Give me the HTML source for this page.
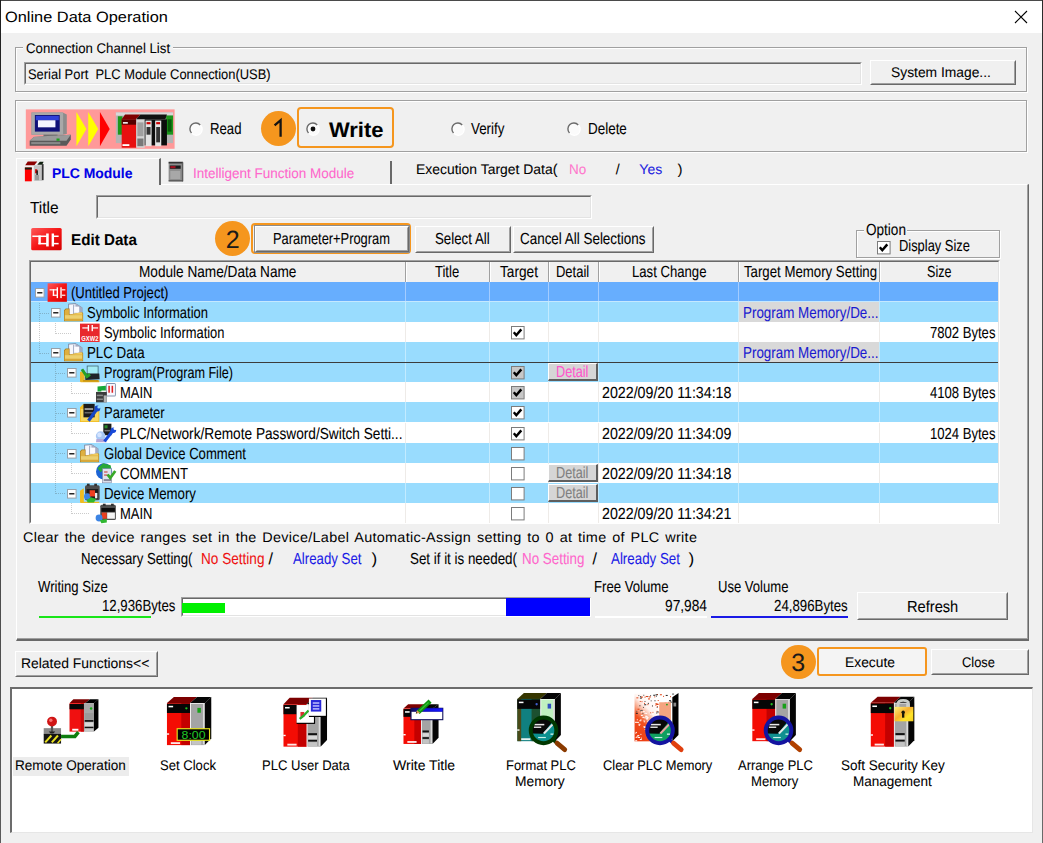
<!DOCTYPE html><html><head><meta charset="utf-8"><title>Online Data Operation</title><style>
html,body{margin:0;padding:0}
body{width:1043px;height:843px;position:relative;overflow:hidden;background:#f0f0f0;font-family:"Liberation Sans", sans-serif;}
body>div,body>svg,body>span{position:absolute;display:block}
span.t{white-space:pre;line-height:1;transform-origin:0 50%;text-rendering:geometricPrecision;-webkit-text-stroke:0.07px;}

</style></head><body>
<div style="left:0px;top:0px;width:1043px;height:33px;background:#fff;"></div>
<div style="left:0px;top:0px;width:1043px;height:1px;background:#4a4a4a;"></div>
<div style="left:0px;top:0px;width:1px;height:843px;background:linear-gradient(#1e1e1e,#3a3a3a 30%,#5a5a5a);"></div>
<div style="left:1042px;top:0px;width:1px;height:843px;background:linear-gradient(#2a2a2a,#4a4a4a 40%,#6a6a6a);"></div>
<span class="t" style="font-size:15px;color:#000;-webkit-text-stroke:0;left:4.92px;top:10.00px;transform:scaleX(1.0910);">Online Data Operation</span>
<svg style="left:1014px;top:10px" width="14" height="14" viewBox="0 0 14 14"><path d="M1 1 L13 13 M13 1 L1 13" stroke="#000" stroke-width="1.1" fill="none"/></svg>
<div style="left:16px;top:48px;width:1012px;height:45px;box-sizing:border-box;border:1px solid #fff;"></div>
<div style="left:15px;top:47px;width:1012px;height:45px;box-sizing:border-box;border:1px solid #a0a0a0;"></div>
<div style="left:23px;top:42px;width:150px;height:12px;background:#f0f0f0;"></div>
<span class="t" style="font-size:14px;color:#000;left:25.57px;top:41.00px;transform:scaleX(0.9444);">Connection Channel List</span>
<div style="left:24px;top:62px;width:838px;height:23px;background:#f0f0f0;box-sizing:border-box;border-top:1px solid #a0a0a0;border-left:1px solid #a0a0a0;border-right:1px solid #fff;border-bottom:1px solid #fff;"></div>
<div style="left:25px;top:63px;width:836px;height:21px;box-sizing:border-box;border-top:1px solid #696969;border-left:1px solid #696969;border-right:1px solid #e3e3e3;border-bottom:1px solid #e3e3e3;"></div>
<span class="t" style="font-size:14px;color:#000;left:27.57px;top:67.00px;transform:scaleX(0.9222);">Serial Port  PLC Module Connection(USB)</span>
<div style="left:870px;top:60px;width:146px;height:25px;background:#f0f0f0;box-sizing:border-box;border-top:1px solid #fff;border-left:1px solid #fff;border-right:1px solid #696969;border-bottom:1px solid #696969;"></div>
<div style="left:871px;top:61px;width:144px;height:23px;box-sizing:border-box;border-top:1px solid #f0f0f0;border-left:1px solid #f0f0f0;border-right:1px solid #a0a0a0;border-bottom:1px solid #a0a0a0;"></div>
<span class="t" style="font-size:14px;color:#000;left:891.17px;top:65.00px;transform:scaleX(0.9872);">System Image...</span>
<div style="left:16px;top:101px;width:1012px;height:52px;box-sizing:border-box;border:1px solid #fff;"></div>
<div style="left:15px;top:100px;width:1012px;height:52px;box-sizing:border-box;border:1px solid #a0a0a0;"></div>

<svg style="left:187.7px;top:120.9px" width="16" height="16" viewBox="0 0 16 16"><circle cx="8" cy="8" r="6.2" fill="#fbfbfb"/><path d="M3.5 12.0 A5.9 5.9 0 0 1 12.2 3.9" fill="none" stroke="#6a6a6a" stroke-width="1.4"/><path d="M12.6 4.3 A5.9 5.9 0 0 1 3.9 12.4" fill="none" stroke="#fff" stroke-width="1.3"/></svg>
<span class="t" style="font-size:16px;color:#000;left:210.28px;top:122.00px;transform:scaleX(0.8220);">Read</span>
<div style="left:261.1px;top:110.5px;width:35.0px;height:35.0px;background:#f5961e;border-radius:50%;"></div>
<svg style="left:268.6px;top:116px" width="20" height="24" viewBox="0 0 20 24"><path d="M5.6 9.4 L11.6 4.2 L11.6 20.8" fill="none" stroke="#141414" stroke-width="2.3" stroke-linejoin="miter"/></svg>
<div style="left:297px;top:107px;width:97px;height:41px;box-sizing:border-box;border:2px solid #f5961e;border-radius:4px;"></div>
<svg style="left:304.8px;top:120.9px" width="16" height="16" viewBox="0 0 16 16"><circle cx="8" cy="8" r="6.2" fill="#fbfbfb"/><path d="M3.5 12.0 A5.9 5.9 0 0 1 12.2 3.9" fill="none" stroke="#6a6a6a" stroke-width="1.4"/><path d="M12.6 4.3 A5.9 5.9 0 0 1 3.9 12.4" fill="none" stroke="#fff" stroke-width="1.3"/><circle cx="8" cy="8" r="2.4" fill="#111"/></svg>
<span class="t" style="font-size:21px;color:#000;font-weight:bold;left:328.56px;top:120.00px;transform:scaleX(1.0435);">Write</span>
<svg style="left:450.3px;top:120.9px" width="16" height="16" viewBox="0 0 16 16"><circle cx="8" cy="8" r="6.2" fill="#fbfbfb"/><path d="M3.5 12.0 A5.9 5.9 0 0 1 12.2 3.9" fill="none" stroke="#6a6a6a" stroke-width="1.4"/><path d="M12.6 4.3 A5.9 5.9 0 0 1 3.9 12.4" fill="none" stroke="#fff" stroke-width="1.3"/></svg>
<span class="t" style="font-size:16px;color:#000;left:471.28px;top:122.00px;transform:scaleX(0.8357);">Verify</span>
<svg style="left:566.3px;top:120.9px" width="16" height="16" viewBox="0 0 16 16"><circle cx="8" cy="8" r="6.2" fill="#fbfbfb"/><path d="M3.5 12.0 A5.9 5.9 0 0 1 12.2 3.9" fill="none" stroke="#6a6a6a" stroke-width="1.4"/><path d="M12.6 4.3 A5.9 5.9 0 0 1 3.9 12.4" fill="none" stroke="#fff" stroke-width="1.3"/></svg>
<span class="t" style="font-size:16px;color:#000;left:587.88px;top:122.00px;transform:scaleX(0.8398);">Delete</span>
<div style="left:16px;top:184px;width:1013px;height:457px;box-sizing:border-box;border-top:1px solid #fff;border-left:1px solid #fff;border-right:2px solid #696969;border-bottom:2px solid #696969;"></div>
<div style="left:1027px;top:185px;width:1px;height:454px;background:#a0a0a0;"></div>
<div style="left:17px;top:638px;width:1011px;height:1px;background:#a0a0a0;"></div>
<div style="left:16px;top:158px;width:145px;height:27px;background:#f0f0f0;box-sizing:border-box;border-top:1px solid #fff;border-left:1px solid #fff;border-right:2px solid #696969;"></div>

<span class="t" style="font-size:14px;color:#0000e6;font-weight:bold;left:51.97px;top:166.00px;transform:scaleX(0.9947);">PLC Module</span>
<div style="left:390px;top:161px;width:2px;height:23px;background:#696969;"></div>

<span class="t" style="font-size:14px;color:#ff66cc;left:193.37px;top:166.00px;transform:scaleX(0.9637);">Intelligent Function Module</span>
<span class="t" style="font-size:14px;color:#000;left:416.37px;top:162.00px;transform:scaleX(0.9937);">Execution Target Data(</span>
<span class="t" style="font-size:14px;color:#ff77cc;left:569.37px;top:162.00px;transform:scaleX(0.9639);">No</span>
<span class="t" style="font-size:14px;color:#000;left:615.67px;top:162.00px;">/</span>
<span class="t" style="font-size:14px;color:#2222e0;left:639.37px;top:162.00px;">Yes</span>
<span class="t" style="font-size:14px;color:#000;left:677.67px;top:162.00px;">)</span>
<span class="t" style="font-size:16px;color:#000;left:29.58px;top:201.00px;transform:scaleX(0.9662);">Title</span>
<div style="left:96px;top:195px;width:496px;height:24px;background:#f0f0f0;box-sizing:border-box;border-top:1px solid #a0a0a0;border-left:1px solid #a0a0a0;border-right:1px solid #fff;border-bottom:1px solid #fff;"></div>
<div style="left:97px;top:196px;width:494px;height:22px;box-sizing:border-box;border-top:1px solid #696969;border-left:1px solid #696969;border-right:1px solid #e3e3e3;border-bottom:1px solid #e3e3e3;"></div>

<span class="t" style="font-size:15.5px;color:#000;font-weight:bold;left:71.30px;top:233.00px;transform:scaleX(0.9808);">Edit Data</span>
<div style="left:214.9px;top:220.8px;width:35.4px;height:35.4px;background:#f5961e;border-radius:50%;"></div>
<span class="t" style="font-size:25px;color:#1a1a1a;left:225.65px;top:228.00px;">2</span>
<div style="left:251.2px;top:222.7px;width:159.6px;height:31.5px;box-sizing:border-box;border:2px solid #f5961e;border-radius:4px;"></div>
<div style="left:253.5px;top:225px;width:156px;height:27.5px;box-sizing:border-box;border:1px solid #8c8c8c;"></div>
<div style="left:254.5px;top:226px;width:154px;height:25.5px;background:#f0f0f0;box-sizing:border-box;border-top:1px solid #fff;border-left:1px solid #fff;border-right:1px solid #696969;border-bottom:1px solid #696969;"></div>
<div style="left:255.5px;top:227px;width:152px;height:23.5px;box-sizing:border-box;border-top:1px solid #f0f0f0;border-left:1px solid #f0f0f0;border-right:1px solid #a0a0a0;border-bottom:1px solid #a0a0a0;"></div>
<span class="t" style="font-size:16px;color:#000;left:273.28px;top:232.00px;transform:scaleX(0.8043);">Parameter+Program</span>
<div style="left:415px;top:226px;width:96px;height:27px;background:#f0f0f0;box-sizing:border-box;border-top:1px solid #fff;border-left:1px solid #fff;border-right:1px solid #696969;border-bottom:1px solid #696969;"></div>
<div style="left:416px;top:227px;width:94px;height:25px;box-sizing:border-box;border-top:1px solid #f0f0f0;border-left:1px solid #f0f0f0;border-right:1px solid #a0a0a0;border-bottom:1px solid #a0a0a0;"></div>
<span class="t" style="font-size:16px;color:#000;left:434.78px;top:232.00px;transform:scaleX(0.8302);">Select All</span>
<div style="left:512.5px;top:226px;width:141.5px;height:27px;background:#f0f0f0;box-sizing:border-box;border-top:1px solid #fff;border-left:1px solid #fff;border-right:1px solid #696969;border-bottom:1px solid #696969;"></div>
<div style="left:513.5px;top:227px;width:139.5px;height:25px;box-sizing:border-box;border-top:1px solid #f0f0f0;border-left:1px solid #f0f0f0;border-right:1px solid #a0a0a0;border-bottom:1px solid #a0a0a0;"></div>
<span class="t" style="font-size:16px;color:#000;left:519.78px;top:232.00px;transform:scaleX(0.8395);">Cancel All Selections</span>
<div style="left:857px;top:230.5px;width:144px;height:28px;box-sizing:border-box;border:1px solid #fff;"></div>
<div style="left:856px;top:229.5px;width:144px;height:28px;box-sizing:border-box;border:1px solid #a0a0a0;"></div>
<div style="left:864px;top:224px;width:43px;height:12px;background:#f0f0f0;"></div>
<span class="t" style="font-size:16px;color:#000;left:865.78px;top:223.00px;transform:scaleX(0.8473);">Option</span>
<svg style="left:877.3px;top:240.5px" width="14" height="14" viewBox="0 0 14 14"><rect x="0.5" y="0.5" width="12.6" height="12.4" fill="#fff" stroke="#7c7c7c" stroke-width="1"/><path d="M2.8 6.3 L5.3 9.2 L10.3 3.4" fill="none" stroke="#000" stroke-width="2.5"/></svg>
<span class="t" style="font-size:16px;color:#000;left:899.28px;top:239.00px;transform:scaleX(0.8059);">Display Size</span>
<div style="left:29px;top:260px;width:971px;height:264px;background:#fff;box-sizing:border-box;border-top:1px solid #a0a0a0;border-left:1px solid #a0a0a0;border-right:1px solid #fff;border-bottom:1px solid #fff;"></div>
<div style="left:30px;top:261px;width:969px;height:262px;box-sizing:border-box;border-top:1px solid #696969;border-left:1px solid #696969;border-right:1px solid #e3e3e3;border-bottom:1px solid #e3e3e3;"></div>
<div style="left:31px;top:262px;width:967px;height:20px;background:#f0f0f0;"></div>
<div style="left:405px;top:262px;width:1px;height:20px;background:#a0a0a0;"></div>
<div style="left:406px;top:262px;width:1px;height:20px;background:#fff;"></div>
<div style="left:489px;top:262px;width:1px;height:20px;background:#a0a0a0;"></div>
<div style="left:490px;top:262px;width:1px;height:20px;background:#fff;"></div>
<div style="left:548px;top:262px;width:1px;height:20px;background:#a0a0a0;"></div>
<div style="left:549px;top:262px;width:1px;height:20px;background:#fff;"></div>
<div style="left:598px;top:262px;width:1px;height:20px;background:#a0a0a0;"></div>
<div style="left:599px;top:262px;width:1px;height:20px;background:#fff;"></div>
<div style="left:738px;top:262px;width:1px;height:20px;background:#a0a0a0;"></div>
<div style="left:739px;top:262px;width:1px;height:20px;background:#fff;"></div>
<div style="left:879px;top:262px;width:1px;height:20px;background:#a0a0a0;"></div>
<div style="left:880px;top:262px;width:1px;height:20px;background:#fff;"></div>
<span class="t" style="font-size:16px;color:#000;left:139.28px;top:265.00px;transform:scaleX(0.8512);">Module Name/Data Name</span>
<span class="t" style="font-size:16px;color:#000;left:435.28px;top:265.00px;transform:scaleX(0.8144);">Title</span>
<span class="t" style="font-size:16px;color:#000;left:499.78px;top:265.00px;transform:scaleX(0.8532);">Target</span>
<span class="t" style="font-size:16px;color:#000;left:556.28px;top:265.00px;transform:scaleX(0.8101);">Detail</span>
<span class="t" style="font-size:16px;color:#000;left:631.78px;top:265.00px;transform:scaleX(0.8204);">Last Change</span>
<span class="t" style="font-size:16px;color:#000;left:743.68px;top:265.00px;transform:scaleX(0.8266);">Target Memory Setting</span>
<span class="t" style="font-size:16px;color:#000;left:926.88px;top:265.00px;transform:scaleX(0.7852);">Size</span>
<div style="left:31px;top:282px;width:967px;height:20px;background:#67aefe;"></div>
<div style="left:405px;top:282px;width:1px;height:20px;background:#a3ccff;"></div>
<div style="left:489px;top:282px;width:1px;height:20px;background:#a3ccff;"></div>
<div style="left:548px;top:282px;width:1px;height:20px;background:#a3ccff;"></div>
<div style="left:598px;top:282px;width:1px;height:20px;background:#a3ccff;"></div>
<div style="left:738px;top:282px;width:1px;height:20px;background:#a3ccff;"></div>
<div style="left:879px;top:282px;width:1px;height:20px;background:#a3ccff;"></div>
<div style="left:31px;top:301px;width:967px;height:1.5px;background:#c4e8ff;"></div>
<svg style="left:34.5px;top:288px" width="10" height="10" viewBox="0 0 10 10"><rect x="0.5" y="0.5" width="8.6" height="8.6" fill="#fff" stroke="#98a0a8"/><path d="M2.2 4.8 H7.4" stroke="#000" stroke-width="1.3"/></svg>

<span class="t" style="font-size:16px;color:#000;left:71.28px;top:286.00px;transform:scaleX(0.8177);">(Untitled Project)</span>
<div style="left:31px;top:302px;width:967px;height:20px;background:#99dcfe;"></div>
<div style="left:405px;top:302px;width:1px;height:20px;background:#c2ebff;"></div>
<div style="left:489px;top:302px;width:1px;height:20px;background:#c2ebff;"></div>
<div style="left:548px;top:302px;width:1px;height:20px;background:#c2ebff;"></div>
<div style="left:598px;top:302px;width:1px;height:20px;background:#c2ebff;"></div>
<div style="left:738px;top:302px;width:1px;height:20px;background:#c2ebff;"></div>
<div style="left:879px;top:302px;width:1px;height:20px;background:#c2ebff;"></div>
<div style="left:739px;top:302px;width:140px;height:20px;background:#d9d9d9;"></div>
<span class="t" style="font-size:16px;color:#1a1ad0;left:742.88px;top:306.00px;transform:scaleX(0.8370);">Program Memory/De...</span>
<svg style="left:51px;top:308px" width="10" height="10" viewBox="0 0 10 10"><rect x="0.5" y="0.5" width="8.6" height="8.6" fill="#fff" stroke="#98a0a8"/><path d="M2.2 4.8 H7.4" stroke="#000" stroke-width="1.3"/></svg>

<span class="t" style="font-size:16px;color:#000;left:86.78px;top:306.00px;transform:scaleX(0.8096);">Symbolic Information</span>
<div style="left:31px;top:322px;width:967px;height:20px;background:#ffffff;"></div>
<div style="left:405px;top:322px;width:1px;height:20px;background:#eeebe8;"></div>
<div style="left:489px;top:322px;width:1px;height:20px;background:#eeebe8;"></div>
<div style="left:548px;top:322px;width:1px;height:20px;background:#eeebe8;"></div>
<div style="left:598px;top:322px;width:1px;height:20px;background:#eeebe8;"></div>
<div style="left:738px;top:322px;width:1px;height:20px;background:#eeebe8;"></div>
<div style="left:879px;top:322px;width:1px;height:20px;background:#eeebe8;"></div>

<span class="t" style="font-size:16px;color:#000;left:103.78px;top:326.00px;transform:scaleX(0.8062);">Symbolic Information</span>
<svg style="left:510.5px;top:326px" width="14" height="14" viewBox="0 0 14 14"><rect x="0.5" y="0.5" width="12.6" height="12.4" fill="#fff" stroke="#7c7c7c" stroke-width="1"/><path d="M2.8 6.3 L5.3 9.2 L10.3 3.4" fill="none" stroke="#000" stroke-width="2.5"/></svg>
<span class="t" style="font-size:16px;color:#000;left:930.08px;top:326.00px;transform:scaleX(0.8174);">7802 Bytes</span>
<div style="left:31px;top:342px;width:967px;height:20px;background:#99dcfe;"></div>
<div style="left:405px;top:342px;width:1px;height:20px;background:#c2ebff;"></div>
<div style="left:489px;top:342px;width:1px;height:20px;background:#c2ebff;"></div>
<div style="left:548px;top:342px;width:1px;height:20px;background:#c2ebff;"></div>
<div style="left:598px;top:342px;width:1px;height:20px;background:#c2ebff;"></div>
<div style="left:738px;top:342px;width:1px;height:20px;background:#c2ebff;"></div>
<div style="left:879px;top:342px;width:1px;height:20px;background:#c2ebff;"></div>
<div style="left:739px;top:342px;width:140px;height:20px;background:#d9d9d9;"></div>
<span class="t" style="font-size:16px;color:#1a1ad0;left:742.88px;top:346.00px;transform:scaleX(0.8370);">Program Memory/De...</span>
<svg style="left:51px;top:348px" width="10" height="10" viewBox="0 0 10 10"><rect x="0.5" y="0.5" width="8.6" height="8.6" fill="#fff" stroke="#98a0a8"/><path d="M2.2 4.8 H7.4" stroke="#000" stroke-width="1.3"/></svg>

<span class="t" style="font-size:16px;color:#000;left:86.78px;top:346.00px;transform:scaleX(0.8308);">PLC Data</span>
<div style="left:31px;top:362px;width:967px;height:20px;background:#99dcfe;"></div>
<div style="left:405px;top:362px;width:1px;height:20px;background:#c2ebff;"></div>
<div style="left:489px;top:362px;width:1px;height:20px;background:#c2ebff;"></div>
<div style="left:548px;top:362px;width:1px;height:20px;background:#c2ebff;"></div>
<div style="left:598px;top:362px;width:1px;height:20px;background:#c2ebff;"></div>
<div style="left:738px;top:362px;width:1px;height:20px;background:#c2ebff;"></div>
<div style="left:879px;top:362px;width:1px;height:20px;background:#c2ebff;"></div>
<svg style="left:67px;top:368px" width="10" height="10" viewBox="0 0 10 10"><rect x="0.5" y="0.5" width="8.6" height="8.6" fill="#fff" stroke="#98a0a8"/><path d="M2.2 4.8 H7.4" stroke="#000" stroke-width="1.3"/></svg>

<span class="t" style="font-size:16px;color:#000;left:103.78px;top:366.00px;transform:scaleX(0.7882);">Program(Program File)</span>
<svg style="left:510.5px;top:366px" width="14" height="14" viewBox="0 0 14 14"><rect x="0.5" y="0.5" width="12.6" height="12.4" fill="#c8c8c8" stroke="#7c7c7c" stroke-width="1"/><path d="M2.8 6.3 L5.3 9.2 L10.3 3.4" fill="none" stroke="#000" stroke-width="2.5"/></svg>
<div style="left:548px;top:362.5px;width:49.5px;height:18.5px;background:#d6d6d6;box-sizing:border-box;border-top:1px solid #fff;border-left:1px solid #fff;border-right:2px solid #5e5e5e;border-bottom:2px solid #5e5e5e;"></div>
<span class="t" style="font-size:16px;color:#ff55cc;left:556.28px;top:365.00px;transform:scaleX(0.7930);">Detail</span>
<div style="left:31px;top:382px;width:967px;height:20px;background:#ffffff;"></div>
<div style="left:405px;top:382px;width:1px;height:20px;background:#eeebe8;"></div>
<div style="left:489px;top:382px;width:1px;height:20px;background:#eeebe8;"></div>
<div style="left:548px;top:382px;width:1px;height:20px;background:#eeebe8;"></div>
<div style="left:598px;top:382px;width:1px;height:20px;background:#eeebe8;"></div>
<div style="left:738px;top:382px;width:1px;height:20px;background:#eeebe8;"></div>
<div style="left:879px;top:382px;width:1px;height:20px;background:#eeebe8;"></div>

<span class="t" style="font-size:16px;color:#000;left:120.28px;top:386.00px;transform:scaleX(0.8110);">MAIN</span>
<svg style="left:510.5px;top:386px" width="14" height="14" viewBox="0 0 14 14"><rect x="0.5" y="0.5" width="12.6" height="12.4" fill="#c8c8c8" stroke="#7c7c7c" stroke-width="1"/><path d="M2.8 6.3 L5.3 9.2 L10.3 3.4" fill="none" stroke="#000" stroke-width="2.5"/></svg>
<span class="t" style="font-size:16px;color:#000;left:601.78px;top:386.00px;transform:scaleX(0.8889);">2022/09/20 11:34:18</span>
<span class="t" style="font-size:16px;color:#000;left:930.08px;top:386.00px;transform:scaleX(0.8174);">4108 Bytes</span>
<div style="left:31px;top:402px;width:967px;height:20px;background:#99dcfe;"></div>
<div style="left:405px;top:402px;width:1px;height:20px;background:#c2ebff;"></div>
<div style="left:489px;top:402px;width:1px;height:20px;background:#c2ebff;"></div>
<div style="left:548px;top:402px;width:1px;height:20px;background:#c2ebff;"></div>
<div style="left:598px;top:402px;width:1px;height:20px;background:#c2ebff;"></div>
<div style="left:738px;top:402px;width:1px;height:20px;background:#c2ebff;"></div>
<div style="left:879px;top:402px;width:1px;height:20px;background:#c2ebff;"></div>
<svg style="left:67px;top:408px" width="10" height="10" viewBox="0 0 10 10"><rect x="0.5" y="0.5" width="8.6" height="8.6" fill="#fff" stroke="#98a0a8"/><path d="M2.2 4.8 H7.4" stroke="#000" stroke-width="1.3"/></svg>

<span class="t" style="font-size:16px;color:#000;left:103.78px;top:406.00px;transform:scaleX(0.8117);">Parameter</span>
<svg style="left:510.5px;top:406px" width="14" height="14" viewBox="0 0 14 14"><rect x="0.5" y="0.5" width="12.6" height="12.4" fill="#fff" stroke="#7c7c7c" stroke-width="1"/><path d="M2.8 6.3 L5.3 9.2 L10.3 3.4" fill="none" stroke="#000" stroke-width="2.5"/></svg>
<div style="left:31px;top:423px;width:967px;height:20px;background:#ffffff;"></div>
<div style="left:405px;top:423px;width:1px;height:20px;background:#eeebe8;"></div>
<div style="left:489px;top:423px;width:1px;height:20px;background:#eeebe8;"></div>
<div style="left:548px;top:423px;width:1px;height:20px;background:#eeebe8;"></div>
<div style="left:598px;top:423px;width:1px;height:20px;background:#eeebe8;"></div>
<div style="left:738px;top:423px;width:1px;height:20px;background:#eeebe8;"></div>
<div style="left:879px;top:423px;width:1px;height:20px;background:#eeebe8;"></div>

<span class="t" style="font-size:16px;color:#000;left:120.28px;top:427.00px;transform:scaleX(0.8539);">PLC/Network/Remote Password/Switch Setti...</span>
<svg style="left:510.5px;top:427px" width="14" height="14" viewBox="0 0 14 14"><rect x="0.5" y="0.5" width="12.6" height="12.4" fill="#fff" stroke="#7c7c7c" stroke-width="1"/><path d="M2.8 6.3 L5.3 9.2 L10.3 3.4" fill="none" stroke="#000" stroke-width="2.5"/></svg>
<span class="t" style="font-size:16px;color:#000;left:601.78px;top:427.00px;transform:scaleX(0.8889);">2022/09/20 11:34:09</span>
<span class="t" style="font-size:16px;color:#000;left:930.08px;top:427.00px;transform:scaleX(0.8174);">1024 Bytes</span>
<div style="left:31px;top:443px;width:967px;height:20px;background:#99dcfe;"></div>
<div style="left:405px;top:443px;width:1px;height:20px;background:#c2ebff;"></div>
<div style="left:489px;top:443px;width:1px;height:20px;background:#c2ebff;"></div>
<div style="left:548px;top:443px;width:1px;height:20px;background:#c2ebff;"></div>
<div style="left:598px;top:443px;width:1px;height:20px;background:#c2ebff;"></div>
<div style="left:738px;top:443px;width:1px;height:20px;background:#c2ebff;"></div>
<div style="left:879px;top:443px;width:1px;height:20px;background:#c2ebff;"></div>
<svg style="left:67px;top:449px" width="10" height="10" viewBox="0 0 10 10"><rect x="0.5" y="0.5" width="8.6" height="8.6" fill="#fff" stroke="#98a0a8"/><path d="M2.2 4.8 H7.4" stroke="#000" stroke-width="1.3"/></svg>

<span class="t" style="font-size:16px;color:#000;left:103.78px;top:447.00px;transform:scaleX(0.8185);">Global Device Comment</span>
<svg style="left:510.5px;top:447px" width="14" height="14" viewBox="0 0 14 14"><rect x="0.5" y="0.5" width="12.6" height="12.4" fill="#fff" stroke="#7c7c7c" stroke-width="1"/></svg>
<div style="left:31px;top:463px;width:967px;height:20px;background:#ffffff;"></div>
<div style="left:405px;top:463px;width:1px;height:20px;background:#eeebe8;"></div>
<div style="left:489px;top:463px;width:1px;height:20px;background:#eeebe8;"></div>
<div style="left:548px;top:463px;width:1px;height:20px;background:#eeebe8;"></div>
<div style="left:598px;top:463px;width:1px;height:20px;background:#eeebe8;"></div>
<div style="left:738px;top:463px;width:1px;height:20px;background:#eeebe8;"></div>
<div style="left:879px;top:463px;width:1px;height:20px;background:#eeebe8;"></div>

<span class="t" style="font-size:16px;color:#000;left:120.28px;top:467.00px;transform:scaleX(0.8220);">COMMENT</span>
<svg style="left:510.5px;top:467px" width="14" height="14" viewBox="0 0 14 14"><rect x="0.5" y="0.5" width="12.6" height="12.4" fill="#fff" stroke="#7c7c7c" stroke-width="1"/></svg>
<div style="left:548px;top:463.5px;width:49.5px;height:18.5px;background:#d6d6d6;box-sizing:border-box;border-top:1px solid #fff;border-left:1px solid #fff;border-right:2px solid #5e5e5e;border-bottom:2px solid #5e5e5e;"></div>
<span class="t" style="font-size:16px;color:#808080;left:556.28px;top:466.00px;transform:scaleX(0.7930);">Detail</span>
<span class="t" style="font-size:16px;color:#000;left:601.78px;top:467.00px;transform:scaleX(0.8889);">2022/09/20 11:34:18</span>
<div style="left:31px;top:483px;width:967px;height:20px;background:#99dcfe;"></div>
<div style="left:405px;top:483px;width:1px;height:20px;background:#c2ebff;"></div>
<div style="left:489px;top:483px;width:1px;height:20px;background:#c2ebff;"></div>
<div style="left:548px;top:483px;width:1px;height:20px;background:#c2ebff;"></div>
<div style="left:598px;top:483px;width:1px;height:20px;background:#c2ebff;"></div>
<div style="left:738px;top:483px;width:1px;height:20px;background:#c2ebff;"></div>
<div style="left:879px;top:483px;width:1px;height:20px;background:#c2ebff;"></div>
<svg style="left:67px;top:489px" width="10" height="10" viewBox="0 0 10 10"><rect x="0.5" y="0.5" width="8.6" height="8.6" fill="#fff" stroke="#98a0a8"/><path d="M2.2 4.8 H7.4" stroke="#000" stroke-width="1.3"/></svg>

<span class="t" style="font-size:16px;color:#000;left:103.78px;top:487.00px;transform:scaleX(0.8272);">Device Memory</span>
<svg style="left:510.5px;top:487px" width="14" height="14" viewBox="0 0 14 14"><rect x="0.5" y="0.5" width="12.6" height="12.4" fill="#fff" stroke="#7c7c7c" stroke-width="1"/></svg>
<div style="left:548px;top:483.5px;width:49.5px;height:18.5px;background:#d6d6d6;box-sizing:border-box;border-top:1px solid #fff;border-left:1px solid #fff;border-right:2px solid #5e5e5e;border-bottom:2px solid #5e5e5e;"></div>
<span class="t" style="font-size:16px;color:#808080;left:556.28px;top:486.00px;transform:scaleX(0.7930);">Detail</span>
<div style="left:31px;top:503px;width:967px;height:20px;background:#ffffff;"></div>
<div style="left:405px;top:503px;width:1px;height:20px;background:#eeebe8;"></div>
<div style="left:489px;top:503px;width:1px;height:20px;background:#eeebe8;"></div>
<div style="left:548px;top:503px;width:1px;height:20px;background:#eeebe8;"></div>
<div style="left:598px;top:503px;width:1px;height:20px;background:#eeebe8;"></div>
<div style="left:738px;top:503px;width:1px;height:20px;background:#eeebe8;"></div>
<div style="left:879px;top:503px;width:1px;height:20px;background:#eeebe8;"></div>

<span class="t" style="font-size:16px;color:#000;left:120.28px;top:507.00px;transform:scaleX(0.8110);">MAIN</span>
<svg style="left:510.5px;top:507px" width="14" height="14" viewBox="0 0 14 14"><rect x="0.5" y="0.5" width="12.6" height="12.4" fill="#fff" stroke="#7c7c7c" stroke-width="1"/></svg>
<span class="t" style="font-size:16px;color:#000;left:601.78px;top:507.00px;transform:scaleX(0.8889);">2022/09/20 11:34:21</span>
<div style="left:39px;top:303px;width:1px;height:51px;background-image:linear-gradient(rgba(70,70,70,.28) 50%,transparent 50%);background-size:1px 2px;"></div>
<div style="left:40px;top:313px;width:10px;height:1px;background-image:linear-gradient(90deg,rgba(70,70,70,.28) 50%,transparent 50%);background-size:2px 1px;"></div>
<div style="left:40px;top:353px;width:10px;height:1px;background-image:linear-gradient(90deg,rgba(70,70,70,.28) 50%,transparent 50%);background-size:2px 1px;"></div>
<div style="left:55px;top:323px;width:1px;height:11px;background-image:linear-gradient(rgba(70,70,70,.28) 50%,transparent 50%);background-size:1px 2px;"></div>
<div style="left:56px;top:333px;width:15px;height:1px;background-image:linear-gradient(90deg,rgba(70,70,70,.28) 50%,transparent 50%);background-size:2px 1px;"></div>
<div style="left:55px;top:363px;width:1px;height:131px;background-image:linear-gradient(rgba(70,70,70,.28) 50%,transparent 50%);background-size:1px 2px;"></div>
<div style="left:56px;top:373px;width:10px;height:1px;background-image:linear-gradient(90deg,rgba(70,70,70,.28) 50%,transparent 50%);background-size:2px 1px;"></div>
<div style="left:56px;top:413px;width:10px;height:1px;background-image:linear-gradient(90deg,rgba(70,70,70,.28) 50%,transparent 50%);background-size:2px 1px;"></div>
<div style="left:56px;top:453px;width:10px;height:1px;background-image:linear-gradient(90deg,rgba(70,70,70,.28) 50%,transparent 50%);background-size:2px 1px;"></div>
<div style="left:56px;top:493px;width:10px;height:1px;background-image:linear-gradient(90deg,rgba(70,70,70,.28) 50%,transparent 50%);background-size:2px 1px;"></div>
<div style="left:71px;top:383px;width:1px;height:11px;background-image:linear-gradient(rgba(70,70,70,.28) 50%,transparent 50%);background-size:1px 2px;"></div>
<div style="left:72px;top:393px;width:17px;height:1px;background-image:linear-gradient(90deg,rgba(70,70,70,.28) 50%,transparent 50%);background-size:2px 1px;"></div>
<div style="left:71px;top:423px;width:1px;height:11px;background-image:linear-gradient(rgba(70,70,70,.28) 50%,transparent 50%);background-size:1px 2px;"></div>
<div style="left:72px;top:433px;width:17px;height:1px;background-image:linear-gradient(90deg,rgba(70,70,70,.28) 50%,transparent 50%);background-size:2px 1px;"></div>
<div style="left:71px;top:463px;width:1px;height:11px;background-image:linear-gradient(rgba(70,70,70,.28) 50%,transparent 50%);background-size:1px 2px;"></div>
<div style="left:72px;top:473px;width:17px;height:1px;background-image:linear-gradient(90deg,rgba(70,70,70,.28) 50%,transparent 50%);background-size:2px 1px;"></div>
<div style="left:71px;top:503px;width:1px;height:11px;background-image:linear-gradient(rgba(70,70,70,.28) 50%,transparent 50%);background-size:1px 2px;"></div>
<div style="left:72px;top:513px;width:17px;height:1px;background-image:linear-gradient(90deg,rgba(70,70,70,.28) 50%,transparent 50%);background-size:2px 1px;"></div>
<div style="left:31px;top:362px;width:967px;height:1px;background:#3c3c3c;"></div>
<span class="t" style="font-size:14px;color:#000;letter-spacing:0.3px;-webkit-text-stroke:0;word-spacing:1.4px;left:23.37px;top:530.00px;transform:scaleX(1.0283);">Clear the device ranges set in the Device/Label Automatic-Assign setting to 0 at time of PLC write</span>
<span class="t" style="font-size:16px;color:#000;left:81.28px;top:552.00px;transform:scaleX(0.8244);">Necessary Setting(</span>
<span class="t" style="font-size:16px;color:#ee1111;left:200.78px;top:552.00px;transform:scaleX(0.8491);">No Setting</span>
<span class="t" style="font-size:16px;color:#000;left:268.58px;top:552.00px;">/</span>
<span class="t" style="font-size:16px;color:#1a1ae6;left:293.28px;top:552.00px;transform:scaleX(0.8274);">Already Set</span>
<span class="t" style="font-size:16px;color:#000;left:371.78px;top:552.00px;">)</span>
<span class="t" style="font-size:16px;color:#000;left:410.28px;top:552.00px;transform:scaleX(0.8350);">Set if it is needed(</span>
<span class="t" style="font-size:16px;color:#ff66cc;left:521.78px;top:552.00px;transform:scaleX(0.8357);">No Setting</span>
<span class="t" style="font-size:16px;color:#000;left:592.58px;top:552.00px;">/</span>
<span class="t" style="font-size:16px;color:#1a1ae6;left:610.78px;top:552.00px;transform:scaleX(0.8334);">Already Set</span>
<span class="t" style="font-size:16px;color:#000;left:688.78px;top:552.00px;">)</span>
<span class="t" style="font-size:16px;color:#000;left:37.98px;top:580.00px;transform:scaleX(0.8199);">Writing Size</span>
<span class="t" style="font-size:16px;color:#000;left:102.28px;top:599.00px;transform:scaleX(0.8256);">12,936Bytes</span>
<div style="left:38.5px;top:615.6px;width:112.5px;height:2.6px;background:#19e619;"></div>
<div style="left:181px;top:597px;width:410px;height:20px;background:#fff;box-sizing:border-box;border-top:1px solid #a0a0a0;border-left:1px solid #a0a0a0;border-right:1px solid #fff;border-bottom:1px solid #fff;"></div>
<div style="left:182px;top:598px;width:408px;height:18px;box-sizing:border-box;border-top:1px solid #696969;border-left:1px solid #696969;border-right:1px solid #e3e3e3;border-bottom:1px solid #e3e3e3;"></div>
<div style="left:182.4px;top:603px;width:42.4px;height:10px;background:#00f000;"></div>
<div style="left:505.7px;top:598px;width:84.5px;height:17.5px;background:#0000ff;"></div>
<span class="t" style="font-size:16px;color:#000;left:593.78px;top:580.00px;transform:scaleX(0.8206);">Free Volume</span>
<span class="t" style="font-size:16px;color:#000;left:665.28px;top:599.00px;transform:scaleX(0.8570);">97,984</span>
<div style="left:594.5px;top:615.6px;width:112px;height:2.4px;background:#fff;"></div>
<span class="t" style="font-size:16px;color:#000;left:718.28px;top:580.00px;transform:scaleX(0.8165);">Use Volume</span>
<span class="t" style="font-size:16px;color:#000;left:774.28px;top:599.00px;transform:scaleX(0.8290);">24,896Bytes</span>
<div style="left:710.7px;top:615.6px;width:137.6px;height:2.4px;background:#1a1ae6;"></div>
<div style="left:857px;top:592px;width:151px;height:27.5px;background:#f0f0f0;box-sizing:border-box;border-top:1px solid #fff;border-left:1px solid #fff;border-right:1px solid #696969;border-bottom:1px solid #696969;"></div>
<div style="left:858px;top:593px;width:149px;height:25.5px;box-sizing:border-box;border-top:1px solid #f0f0f0;border-left:1px solid #f0f0f0;border-right:1px solid #a0a0a0;border-bottom:1px solid #a0a0a0;"></div>
<span class="t" style="font-size:16px;color:#000;left:906.58px;top:600.00px;transform:scaleX(0.9145);">Refresh</span>
<div style="left:15.3px;top:651px;width:142.7px;height:25.5px;background:#f0f0f0;box-sizing:border-box;border-top:1px solid #fff;border-left:1px solid #fff;border-right:1px solid #696969;border-bottom:1px solid #696969;"></div>
<div style="left:16.3px;top:652px;width:140.7px;height:23.5px;box-sizing:border-box;border-top:1px solid #f0f0f0;border-left:1px solid #f0f0f0;border-right:1px solid #a0a0a0;border-bottom:1px solid #a0a0a0;"></div>
<span class="t" style="font-size:14px;color:#000;left:21.37px;top:656.00px;transform:scaleX(0.9927);">Related Functions&lt;&lt;</span>
<div style="left:780.8000000000001px;top:644.5px;width:34.8px;height:34.8px;background:#f5961e;border-radius:50%;"></div>
<span class="t" style="font-size:25px;color:#1a1a1a;left:791.25px;top:651.00px;">3</span>
<div style="left:817px;top:647px;width:109.5px;height:28.5px;background:#f4f4f4;box-sizing:border-box;border:2px solid #f5961e;border-radius:3px;"></div>
<span class="t" style="font-size:14px;color:#000;left:845.37px;top:655.00px;transform:scaleX(0.9875);">Execute</span>
<div style="left:931px;top:648.5px;width:97.5px;height:26.5px;background:#f0f0f0;box-sizing:border-box;border-top:1px solid #fff;border-left:1px solid #fff;border-right:1px solid #696969;border-bottom:1px solid #696969;"></div>
<div style="left:932px;top:649.5px;width:95.5px;height:24.5px;box-sizing:border-box;border-top:1px solid #f0f0f0;border-left:1px solid #f0f0f0;border-right:1px solid #a0a0a0;border-bottom:1px solid #a0a0a0;"></div>
<span class="t" style="font-size:14px;color:#000;left:961.77px;top:655.00px;transform:scaleX(0.9180);">Close</span>
<div style="left:10px;top:687px;width:1023px;height:146px;background:#fff;box-sizing:border-box;border-top:2px solid #6c6c6c;border-left:2px solid #6c6c6c;border-right:1px solid #e6e6e6;border-bottom:1px solid #e6e6e6;"></div>
<div style="left:13.3px;top:757px;width:116px;height:19px;background:#ececec;"></div>
<span class="t" style="font-size:14px;color:#000;left:14.87px;top:758.00px;transform:scaleX(0.9681);">Remote Operation</span>
<span class="t" style="font-size:14px;color:#000;left:160.37px;top:758.00px;transform:scaleX(0.9339);">Set Clock</span>
<span class="t" style="font-size:14px;color:#000;left:262.37px;top:758.00px;transform:scaleX(0.9321);">PLC User Data</span>
<span class="t" style="font-size:14px;color:#000;left:393.07px;top:758.00px;">Write Title</span>
<span class="t" style="font-size:14px;color:#000;left:506.37px;top:758.00px;transform:scaleX(0.9244);">Format PLC</span>
<span class="t" style="font-size:14px;color:#000;left:515.37px;top:774.00px;transform:scaleX(0.9841);">Memory</span>
<span class="t" style="font-size:14px;color:#000;left:603.37px;top:758.00px;transform:scaleX(0.9179);">Clear PLC Memory</span>
<span class="t" style="font-size:14px;color:#000;left:738.07px;top:758.00px;transform:scaleX(0.9249);">Arrange PLC</span>
<span class="t" style="font-size:14px;color:#000;left:751.37px;top:774.00px;transform:scaleX(0.9347);">Memory</span>
<span class="t" style="font-size:14px;color:#000;left:841.37px;top:758.00px;transform:scaleX(0.9662);">Soft Security Key</span>
<span class="t" style="font-size:14px;color:#000;left:853.37px;top:774.00px;transform:scaleX(0.9638);">Management</span>
<svg style="left:0;top:0" width="1043" height="843" viewBox="0 0 1043 843"><defs><linearGradient id="gred" x1="0" y1="0" x2="1" y2="1"><stop offset="0" stop-color="#ff5a5a"/><stop offset="0.5" stop-color="#f51414"/><stop offset="1" stop-color="#d40000"/></linearGradient><linearGradient id="gtitle" x1="0" y1="0" x2="1" y2="0"><stop offset="0" stop-color="#101058"/><stop offset="0.45" stop-color="#1010d8"/><stop offset="1" stop-color="#1414ff"/></linearGradient><linearGradient id="gclr" x1="0.7" y1="0" x2="0.2" y2="1"><stop offset="0" stop-color="#fff"/><stop offset="0.3" stop-color="#fff4f0"/><stop offset="0.48" stop-color="#f8a080"/><stop offset="0.62" stop-color="#f05020"/><stop offset="1" stop-color="#ee3c10"/></linearGradient><linearGradient id="glock" x1="0" y1="0" x2="1" y2="1"><stop offset="0" stop-color="#fff27a"/><stop offset="0.45" stop-color="#f8b030"/><stop offset="0.7" stop-color="#ffe428"/><stop offset="1" stop-color="#f8d020"/></linearGradient></defs><rect x="25.83" y="109.37" width="148.77" height="39.42" fill="#ff9999" /><polygon points="31.51,112.44 62.64,112.44 66.79,114.43 66.79,133.91 62.64,134.67 31.51,134.67" fill="#8c8c8c" /><rect x="31.51" y="112.44" width="31.6" height="22.24" fill="#a8a8a8" /><rect x="34.88" y="115.04" width="24.85" height="16.56" fill="#101078" /><rect x="35.8" y="115.96" width="23.01" height="4.29" fill="#3040d8" /><rect x="37.95" y="120.26" width="17.48" height="7.06" fill="#f4f4ff" /><rect x="43.47" y="134.67" width="14.11" height="2.76" fill="#6e6e6e" /><polygon points="33.96,136.98 70.77,134.67 70.77,139.58 66.48,145.72 29.67,145.72 29.67,140.81" fill="#5a5a5a" /><polygon points="33.96,136.82 70.77,134.67 66.48,140.81 29.67,140.81" fill="#9a9a9a" /><rect x="31.2" y="142.04" width="29.14" height="2.15" fill="#888" /><rect x="56.51" y="138.51" width="3.07" height="2.3" fill="#20a020" /><polygon points="76.45,111.98 86.42,129.0 76.45,146.18" fill="#ffff00" /><polygon points="88.26,111.98 98.23,129.0 88.26,146.18" fill="#ffff00" /><polygon points="99.91,111.98 109.73,129.0 99.91,146.18" fill="#ff0000" /><rect x="115.87" y="112.44" width="57.21" height="30.67" fill="#b4b4b4" /><rect x="115.87" y="112.44" width="57.21" height="3.07" fill="#d8d8d8" /><rect x="117.86" y="116.27" width="4.6" height="18.4" fill="#1c961c" /><rect x="166.17" y="115.5" width="6.9" height="19.17" fill="#1c961c" /><rect x="167.71" y="119.34" width="3.83" height="12.27" fill="#0a5a0a" /><polygon points="125.07,114.43 140.4,114.43 136.26,119.34 121.69,119.34" fill="#800000" /><rect x="121.69" y="119.34" width="14.57" height="28.37" fill="#e81010" /><rect x="121.69" y="119.34" width="14.57" height="5.37" fill="#500" /><rect x="122.46" y="144.18" width="6.9" height="1.84" fill="#fff" /><rect x="122.92" y="122.1" width="4.91" height="1.53" fill="#fff" /><rect x="136.26" y="118.57" width="8.44" height="29.14" fill="#d4d4d4" /><rect x="137.34" y="122.4" width="6.13" height="13.8" fill="#a0a0a0" /><rect x="137.34" y="138.51" width="6.13" height="7.67" fill="#787878" /><polygon points="140.4,114.43 166.94,114.43 165.4,119.34 136.26,119.34" fill="#111" /><rect x="144.7" y="119.34" width="22.24" height="26.07" fill="#0c0c0c" /><rect x="145.47" y="120.56" width="6.13" height="25.61" fill="#e4e4e4" /><rect x="146.54" y="127.01" width="3.99" height="7.67" fill="#333" /><rect x="146.54" y="122.1" width="3.99" height="2.15" fill="#c00" /><rect x="155.13" y="120.56" width="6.13" height="25.61" fill="#e4e4e4" /><rect x="156.2" y="127.01" width="3.83" height="15.34" fill="#333" /><rect x="156.2" y="122.1" width="3.83" height="2.15" fill="#c00" /><polygon points="27.77,161.47 37.26,161.47 34.38,165.21 25.18,165.21" fill="#8c0000" /><rect x="24.89" y="167.51" width="6.9" height="13.81" fill="#ff0000" /><rect x="24.89" y="167.51" width="6.9" height="2.01" fill="#102010" /><polygon points="39.85,161.75 43.59,161.75 42.15,164.63 37.26,164.63" fill="#102010" /><rect x="33.81" y="165.21" width="8.34" height="15.65" fill="#c4c4c4" /><rect x="41.86" y="164.06" width="1.73" height="16.11" fill="#333" /><rect x="35.07" y="169.23" width="2.19" height="4.03" fill="#d01010" /><rect x="36.4" y="170.38" width="1.44" height="4.6" fill="#111" /><rect x="35.07" y="174.99" width="3.91" height="5.18" fill="#999" /><rect x="168.63" y="162.33" width="14.38" height="18.99" fill="#8e8e8e" /><rect x="168.63" y="161.75" width="14.38" height="1.73" fill="#333" /><rect x="181.86" y="162.33" width="1.44" height="18.99" fill="#5c5c5c" /><rect x="169.78" y="165.49" width="10.93" height="3.28" fill="#1a1a1a" /><rect x="170.36" y="166.07" width="5.18" height="2.13" fill="#a01020" /><rect x="170.36" y="170.96" width="9.78" height="8.06" fill="#a8a8a8" /><rect x="168.63" y="180.17" width="14.38" height="1.27" fill="#555" /><rect x="31.19" y="228.03" width="30.49" height="22.15" fill="url(#gred)" rx="1.5"/><rect x="32.34" y="235.51" width="14.67" height="1.5" fill="#fff" /><rect x="38.38" y="235.51" width="2.42" height="8.75" fill="#fff" /><rect x="38.38" y="242.87" width="8.63" height="1.5" fill="#fff" /><rect x="46.15" y="233.49" width="2.59" height="12.95" fill="#fff" /><rect x="51.62" y="233.49" width="2.42" height="12.95" fill="#fff" /><rect x="53.92" y="235.51" width="4.72" height="1.5" fill="#fff" /><rect x="53.92" y="242.87" width="4.72" height="1.5" fill="#fff" /><rect x="47.61" y="283.32" width="19.27" height="18.5" fill="url(#gred)" /><rect x="49.54" y="289.25" width="7.71" height="1.16" fill="#fff" /><rect x="52.78" y="289.25" width="1.39" height="6.55" fill="#fff" /><rect x="52.78" y="294.65" width="4.86" height="1.16" fill="#fff" /><rect x="56.63" y="287.32" width="1.39" height="10.79" fill="#fff" /><rect x="60.33" y="287.32" width="1.39" height="10.79" fill="#fff" /><rect x="61.72" y="289.25" width="3.62" height="1.16" fill="#fff" /><rect x="61.72" y="294.65" width="3.62" height="1.16" fill="#fff" /><polygon points="68.24,303.86 75.56,303.32 82.34,307.48 82.34,315.03 68.24,315.03" fill="#78809a" /><polygon points="68.93,304.55 75.41,304.09 81.57,307.79 81.57,315.03 68.93,315.03" fill="#dfe3ee" /><rect x="69.55" y="304.86" width="3.55" height="11.33" fill="#f6f7fc" /><rect x="73.09" y="304.86" width="0.77" height="11.33" fill="#9aa2ba" /><rect x="74.17" y="306.71" width="4.93" height="5.63" fill="#fbfbff" /><polygon points="75.56,303.47 82.19,307.63 82.19,312.33 79.26,312.33 79.26,306.55 75.56,306.55" fill="#a4acc4" /><polygon points="64.0,310.25 65.7,308.56 69.55,308.56 69.55,314.41 81.88,312.26 83.11,313.03 83.11,321.35 64.0,321.35" fill="#a87c20" /><polygon points="64.62,310.72 66.0,309.33 68.93,309.33 68.93,315.03 81.73,313.03 82.5,313.49 82.5,320.73 64.62,320.73" fill="#deb040" /><rect x="64.92" y="315.19" width="17.26" height="4.93" fill="#ecd070" /><rect x="64.92" y="318.73" width="17.26" height="1.7" fill="#d8a838" /><polygon points="69.55,314.41 81.88,312.26 82.5,314.41" fill="#f0cc60" /><rect x="80.0" y="323.62" width="19.65" height="18.34" fill="#e8282c" /><rect x="82.31" y="327.32" width="6.17" height="1.23" fill="#fff" /><rect x="87.71" y="325.01" width="1.39" height="6.17" fill="#fff" /><rect x="91.56" y="325.01" width="1.39" height="6.17" fill="#fff" /><rect x="92.33" y="327.32" width="5.78" height="1.23" fill="#fff" /><text x="89.87" y="340.58" font-family="Liberation Sans" font-weight="bold" font-size="7.6" fill="#fff" text-anchor="middle" textLength="17" lengthAdjust="spacingAndGlyphs">GXW2</text><polygon points="68.24,343.86 75.56,343.32 82.34,347.48 82.34,355.03 68.24,355.03" fill="#78809a" /><polygon points="68.93,344.55 75.41,344.09 81.57,347.79 81.57,355.03 68.93,355.03" fill="#dfe3ee" /><rect x="69.55" y="344.86" width="3.55" height="11.33" fill="#f6f7fc" /><rect x="73.09" y="344.86" width="0.77" height="11.33" fill="#9aa2ba" /><rect x="74.17" y="346.71" width="4.93" height="5.63" fill="#fbfbff" /><polygon points="75.56,343.47 82.19,347.63 82.19,352.33 79.26,352.33 79.26,346.55 75.56,346.55" fill="#a4acc4" /><polygon points="64.0,350.25 65.7,348.56 69.55,348.56 69.55,354.41 81.88,352.26 83.11,353.03 83.11,361.35 64.0,361.35" fill="#a87c20" /><polygon points="64.62,350.72 66.0,349.33 68.93,349.33 68.93,355.03 81.73,353.03 82.5,353.49 82.5,360.73 64.62,360.73" fill="#deb040" /><rect x="64.92" y="355.19" width="17.26" height="4.93" fill="#ecd070" /><rect x="64.92" y="358.73" width="17.26" height="1.7" fill="#d8a838" /><polygon points="69.55,354.41 81.88,352.26 82.5,354.41" fill="#f0cc60" /><polygon points="80.0,371.95 84.62,370.41 84.62,380.43 99.27,380.43 99.27,382.35 80.77,382.35 80.0,381.58" fill="#e8b424" /><rect x="86.78" y="365.63" width="11.71" height="9.4" fill="#3c6470" /><rect x="87.55" y="366.4" width="10.17" height="7.86" fill="#a4ecf4" /><polygon points="85.01,373.49 99.27,373.49 99.65,379.27 85.39,380.04" fill="#202428" /><polyline points="81.93,369.25 86.94,376.57 90.02,374.26" fill="none" stroke="#28a028" stroke-width="2.93" /><rect x="83.08" y="380.04" width="15.41" height="1.54" fill="#c89410" /><rect x="105.87" y="383.09" width="10.02" height="13.33" fill="#8494ac" rx="1.5"/><rect x="106.79" y="384.01" width="8.17" height="11.48" fill="#f8f8ff" /><rect x="108.33" y="385.78" width="1.54" height="6.94" fill="#e02020" /><rect x="111.57" y="385.78" width="1.54" height="6.94" fill="#e02020" /><rect x="96.0" y="391.95" width="10.79" height="10.4" fill="#3c3c3c" /><rect x="96.77" y="394.65" width="6.17" height="1.54" fill="#8a8a8a" /><rect x="96.77" y="398.5" width="6.17" height="1.54" fill="#8a8a8a" /><rect x="103.71" y="395.42" width="3.08" height="6.94" fill="#b4b4b4" /><polygon points="97.54,386.55 105.87,385.78 105.87,390.41 101.39,390.41 101.39,391.56 97.54,391.56" fill="#18a838" /><polygon points="80.0,407.32 83.08,404.24 88.48,404.24 90.02,407.32 99.27,407.32 99.27,421.97 80.0,421.97" fill="#f0bc20" /><rect x="80.77" y="408.87" width="17.73" height="12.33" fill="#f8d860" /><rect x="83.47" y="403.86" width="11.18" height="13.49" fill="#1c1c1c" /><rect x="84.62" y="408.09" width="8.48" height="1.93" fill="#9a9a9a" /><rect x="84.62" y="411.95" width="8.48" height="1.54" fill="#6a6a6a" /><polyline points="88.48,420.81 96.57,409.64" fill="none" stroke="#1448c8" stroke-width="3.24" /><circle cx="97.34" cy="408.48" r="2.93" fill="#1448c8" /><circle cx="98.88" cy="406.94" r="1.54" fill="#99ddff" /><rect x="103.32" y="423.7" width="8.09" height="11.56" fill="#1c1c1c" /><rect x="104.48" y="425.24" width="3.08" height="3.08" fill="#2a8a2a" /><rect x="104.48" y="429.87" width="5.78" height="1.54" fill="#777" /><circle cx="100.62" cy="436.03" r="4.78" fill="#a8c8f4" /><circle cx="99.47" cy="434.88" r="2.31" fill="#d4e4ff" /><polygon points="96.39,439.11 105.25,439.11 106.79,442.2 96.0,442.2" fill="#b4a8d8" /><polyline points="104.48,441.43 112.57,431.02" fill="none" stroke="#1848d8" stroke-width="3.08" /><circle cx="113.34" cy="430.25" r="2.77" fill="#1848d8" /><circle cx="115.11" cy="428.48" r="1.54" fill="#fff" /><polygon points="84.24,444.86 91.56,444.32 98.34,448.48 98.34,456.03 84.24,456.03" fill="#78809a" /><polygon points="84.93,445.55 91.41,445.09 97.57,448.79 97.57,456.03 84.93,456.03" fill="#dfe3ee" /><rect x="85.55" y="445.86" width="3.55" height="11.33" fill="#f6f7fc" /><rect x="89.09" y="445.86" width="0.77" height="11.33" fill="#9aa2ba" /><rect x="90.17" y="447.71" width="4.93" height="5.63" fill="#fbfbff" /><polygon points="91.56,444.47 98.19,448.63 98.19,453.33 95.26,453.33 95.26,447.55 91.56,447.55" fill="#a4acc4" /><polygon points="80.0,451.25 81.7,449.56 85.55,449.56 85.55,455.41 97.88,453.26 99.11,454.03 99.11,462.35 80.0,462.35" fill="#a87c20" /><polygon points="80.62,451.72 82.0,450.33 84.93,450.33 84.93,456.03 97.73,454.03 98.5,454.49 98.5,461.73 80.62,461.73" fill="#deb040" /><rect x="80.92" y="456.19" width="17.26" height="4.93" fill="#ecd070" /><rect x="80.92" y="459.73" width="17.26" height="1.7" fill="#d8a838" /><polygon points="85.55,455.41 97.88,453.26 98.5,455.41" fill="#f0cc60" /><circle cx="104.09" cy="471.41" r="8.09" fill="#1c64d4" /><polygon points="97.54,468.32 102.94,463.31 110.64,465.24 111.41,470.64 105.25,468.32 100.62,472.18" fill="#28a838" /><rect x="102.55" y="468.71" width="8.86" height="14.1" fill="#dfe3ee" stroke="#7c88a4" stroke-width="0.6"/><rect x="104.09" y="471.41" width="3.47" height="1.16" fill="#c44" /><rect x="104.09" y="474.49" width="3.47" height="1.16" fill="#c44" /><rect x="103.71" y="479.11" width="7.71" height="1.93" fill="#889" /><polyline points="107.56,474.49 110.26,477.96 115.27,471.02" fill="none" stroke="#38a828" stroke-width="2.77" /><polygon points="80.0,490.64 83.85,488.32 83.85,501.81 99.27,501.81 99.27,502.97 80.77,502.97 80.0,502.2" fill="#f0bc20" /><rect x="85.01" y="485.24" width="14.64" height="15.03" fill="#4c4c4c" rx="1.5"/><rect x="86.94" y="483.7" width="2.7" height="2.31" fill="#333" /><rect x="94.26" y="483.7" width="2.7" height="2.31" fill="#333" /><rect x="86.55" y="489.09" width="11.56" height="10.02" fill="#1c1c1c" /><circle cx="87.32" cy="496.42" r="3.24" fill="#3c84e4" /><rect x="89.63" y="490.25" width="5.39" height="6.17" fill="#f04020" /><rect x="95.03" y="492.95" width="2.31" height="5.39" fill="#eee" /><polygon points="86.55,500.27 90.79,497.19 96.18,499.11 93.87,502.58 87.71,502.58" fill="#30b830" /><rect x="100.24" y="504.86" width="15.65" height="15.03" fill="#505050" rx="1.5"/><rect x="102.94" y="503.7" width="2.7" height="2.31" fill="#333" /><rect x="111.03" y="503.7" width="2.7" height="2.31" fill="#333" /><rect x="101.39" y="507.94" width="13.49" height="3.85" fill="#0c0c0c" /><rect x="107.18" y="512.56" width="7.71" height="6.17" fill="#f4f4f4" /><rect x="101.78" y="512.56" width="5.01" height="6.17" fill="#e84020" /><circle cx="99.08" cy="517.96" r="3.47" fill="#3c84e4" /><polygon points="99.85,520.27 106.79,519.11 106.79,522.58 101.39,523.35" fill="#30b830" /><polygon points="73.38,699.25 89.95,699.25 85.33,703.1 69.68,703.1" fill="#7a0000" /><polygon points="89.95,699.25 98.43,699.25 94.19,703.1 85.33,703.1" fill="#000" /><rect x="69.53" y="703.1" width="14.41" height="28.52" fill="#f01010" /><rect x="80.7" y="703.1" width="3.24" height="28.52" fill="#c80808" /><rect x="69.53" y="704.03" width="14.41" height="5.24" fill="#080808" /><rect x="72.22" y="728.77" width="6.17" height="1.93" fill="#fff" /><rect x="83.94" y="703.1" width="10.02" height="28.52" fill="#a8a8a8" /><rect x="84.71" y="713.12" width="8.71" height="6.55" fill="#9a9a9a" /><rect x="84.71" y="720.06" width="8.71" height="1.7" fill="#111" /><rect x="84.71" y="722.37" width="8.71" height="3.85" fill="#d8d8d8" /><rect x="84.71" y="726.84" width="8.71" height="1.39" fill="#111" /><rect x="84.71" y="728.54" width="8.71" height="2.7" fill="#c8c8c8" /><circle cx="91.11" cy="708.5" r="1.23" fill="#18b018" /><polygon points="93.96,703.1 98.43,699.25 98.43,727.76 93.96,731.62" fill="#000" /><polyline points="61.05,736.47 74.92,736.47 78.39,732.24" fill="none" stroke="#0e7e0e" stroke-width="3.55" /><rect x="43.71" y="728.15" width="17.34" height="6.17" fill="#8a8a8a" /><rect x="43.71" y="733.93" width="17.34" height="9.63" fill="#141414" /><polyline points="45.25,742.41 51.41,735.47" fill="none" stroke="#e8e020" stroke-width="2.0" /><polyline points="51.8,742.41 57.97,735.47" fill="none" stroke="#e8e020" stroke-width="2.0" /><polyline points="57.58,743.18 61.05,739.33" fill="none" stroke="#e8e020" stroke-width="1.54" /><rect x="50.87" y="725.45" width="2.24" height="6.55" fill="#555" /><polygon points="48.72,731.62 55.27,731.62 53.34,733.55 50.64,733.55" fill="#222" /><circle cx="52.03" cy="721.6" r="4.93" fill="#d01414" /><circle cx="50.8" cy="720.21" r="1.7" fill="#f87070" /><polygon points="173.89,696.94 197.01,696.94 190.08,703.1 166.96,703.1" fill="#7c0000" /><polygon points="197.01,696.94 211.27,696.94 204.95,703.1 190.08,703.1" fill="#050505" /><rect x="166.96" y="703.1" width="23.12" height="42.0" fill="#f40c04" /><rect x="181.29" y="703.1" width="8.79" height="42.0" fill="#c40000" /><rect x="166.96" y="703.72" width="23.12" height="9.25" fill="#060606" /><rect x="168.5" y="705.8" width="4.62" height="1.54" fill="#fff" /><rect x="170.81" y="742.18" width="9.25" height="1.85" fill="#fff" opacity="0.9"/><rect x="166.8" y="733.34" width="2.31" height="1.39" fill="#fff" /><circle cx="186.38" cy="708.35" r="1.16" fill="#20c020" /><rect x="190.08" y="703.1" width="1.08" height="42.0" fill="#f0f0f0" /><rect x="191.0" y="703.72" width="13.33" height="41.39" fill="#a4a4a4" /><rect x="197.4" y="707.88" width="3.47" height="4.86" fill="#18a018" /><rect x="191.62" y="731.62" width="9.63" height="1.93" fill="#111" /><rect x="191.62" y="734.32" width="9.63" height="3.47" fill="#d8d8d8" /><rect x="191.62" y="738.32" width="9.63" height="1.7" fill="#111" /><rect x="191.62" y="740.64" width="9.63" height="4.08" fill="#c4c4c4" /><rect x="202.95" y="703.87" width="1.85" height="40.46" fill="#dcdcdc" /><polygon points="204.8,703.1 211.27,696.94 211.27,738.52 204.8,745.11" fill="#050505" /><rect x="176.59" y="728.15" width="33.53" height="12.72" fill="#e4e41c" /><rect x="177.75" y="729.31" width="31.21" height="10.4" fill="#000" /><text x="193.55" y="738.71" font-family="Liberation Sans" font-size="10.5" fill="#20c828" text-anchor="middle" textLength="24" lengthAdjust="spacingAndGlyphs">8:00</text><polygon points="289.65,697.71 312.77,697.71 306.61,704.26 283.49,704.26" fill="#7c0000" /><polygon points="312.77,697.71 327.03,697.71 320.71,704.26 306.61,704.26" fill="#050505" /><rect x="283.49" y="704.26" width="23.12" height="42.39" fill="#f40c04" /><rect x="297.82" y="704.26" width="8.79" height="42.39" fill="#c40000" /><rect x="283.49" y="704.87" width="23.12" height="9.34" fill="#060606" /><rect x="285.03" y="706.96" width="4.62" height="1.54" fill="#fff" /><rect x="287.34" y="743.72" width="9.25" height="1.85" fill="#fff" opacity="0.9"/><rect x="283.33" y="734.78" width="2.31" height="1.39" fill="#fff" /><circle cx="302.91" cy="709.56" r="1.16" fill="#20c020" /><rect x="306.61" y="704.26" width="1.08" height="42.39" fill="#f0f0f0" /><rect x="307.53" y="704.87" width="12.56" height="41.77" fill="#a4a4a4" /><rect x="313.93" y="709.04" width="3.47" height="4.86" fill="#18a018" /><rect x="308.15" y="733.16" width="8.86" height="1.93" fill="#111" /><rect x="308.15" y="735.86" width="8.86" height="3.47" fill="#d8d8d8" /><rect x="308.15" y="739.87" width="8.86" height="1.7" fill="#111" /><rect x="308.15" y="742.18" width="8.86" height="4.08" fill="#c4c4c4" /><rect x="318.71" y="705.03" width="1.85" height="40.85" fill="#dcdcdc" /><polygon points="320.56,704.26 327.03,697.71 327.03,740.06 320.56,746.65" fill="#050505" /><rect x="296.59" y="705.03" width="18.5" height="18.88" fill="#000" /><rect x="296.59" y="705.03" width="17.34" height="17.73" fill="#fff" /><rect x="300.44" y="711.97" width="3.85" height="5.01" fill="#d83030" /><polyline points="299.67,718.9 303.14,716.2 308.54,710.42" fill="none" stroke="#28b028" stroke-width="2.31" /><rect x="308.92" y="698.48" width="18.11" height="18.5" fill="#000" /><rect x="308.92" y="698.48" width="16.96" height="17.34" fill="#fff" /><rect x="310.85" y="700.02" width="10.4" height="11.56" fill="#2828d8" /><rect x="312.77" y="702.33" width="6.55" height="1.39" fill="#c8c8ff" /><rect x="312.77" y="705.26" width="6.55" height="1.39" fill="#c8c8ff" /><rect x="312.77" y="708.19" width="6.55" height="1.39" fill="#c8c8ff" /><polygon points="408.11,704.26 425.61,704.26 420.98,708.5 403.49,708.5" fill="#7c0000" /><polygon points="425.61,704.26 438.55,704.26 432.62,708.5 420.98,708.5" fill="#050505" /><rect x="403.49" y="708.5" width="17.5" height="35.45" fill="#f40c04" /><rect x="414.33" y="708.5" width="6.65" height="35.45" fill="#c40000" /><rect x="403.49" y="709.11" width="17.5" height="7.71" fill="#060606" /><rect x="405.03" y="711.19" width="4.62" height="1.54" fill="#fff" /><rect x="407.34" y="741.02" width="9.25" height="1.85" fill="#fff" opacity="0.9"/><rect x="403.33" y="734.02" width="2.31" height="1.39" fill="#fff" /><rect x="420.98" y="708.5" width="1.08" height="35.45" fill="#f0f0f0" /><rect x="421.91" y="709.11" width="10.1" height="34.84" fill="#a4a4a4" /><rect x="428.3" y="713.28" width="3.47" height="4.86" fill="#18a018" /><rect x="422.52" y="730.46" width="6.4" height="1.93" fill="#111" /><rect x="422.52" y="733.16" width="6.4" height="3.47" fill="#d8d8d8" /><rect x="422.52" y="737.17" width="6.4" height="1.7" fill="#111" /><rect x="422.52" y="739.48" width="6.4" height="4.08" fill="#c4c4c4" /><rect x="430.62" y="709.27" width="1.85" height="33.91" fill="#dcdcdc" /><polygon points="432.47,708.5 438.55,704.26 438.55,737.73 432.47,743.95" fill="#050505" /><rect x="410.42" y="707.73" width="32.91" height="12.49" fill="#10105c" /><rect x="411.58" y="711.58" width="30.67" height="7.55" fill="#fff" /><rect x="411.19" y="708.34" width="31.37" height="3.24" fill="url(#gtitle)" /><polyline points="418.13,712.35 430.08,701.18" fill="none" stroke="#0c940c" stroke-width="4.32" /><polyline points="419.52,710.96 428.54,702.49" fill="none" stroke="#38c038" stroke-width="1.23" /><polygon points="415.82,713.51 417.13,710.19 420.21,713.12" fill="#d8a050" /><polygon points="415.82,713.51 416.36,711.97 417.44,713.12" fill="#000" /><polygon points="523.88,693.01 546.85,693.01 540.3,698.94 517.33,698.94" fill="#363600" /><polygon points="546.85,693.01 560.88,693.01 555.1,698.94 540.3,698.94" fill="#050505" /><rect x="517.33" y="698.94" width="22.97" height="42.24" fill="#108080" /><rect x="531.57" y="698.94" width="8.73" height="42.24" fill="#1c5030" /><rect x="517.33" y="698.94" width="3.85" height="42.24" fill="#4a4a18" /><rect x="517.33" y="699.56" width="22.97" height="9.31" fill="#060606" /><rect x="518.87" y="701.64" width="4.62" height="1.54" fill="#fff" /><rect x="521.18" y="738.25" width="9.25" height="1.85" fill="#fff" opacity="0.9"/><rect x="517.18" y="729.35" width="2.31" height="1.39" fill="#fff" /><circle cx="536.62" cy="704.22" r="1.16" fill="#4060d0" /><rect x="540.3" y="698.94" width="1.08" height="42.24" fill="#f0f0f0" /><rect x="541.22" y="699.56" width="13.26" height="41.62" fill="#c0f0c0" /><rect x="547.62" y="703.72" width="3.47" height="4.86" fill="#3050c0" /><rect x="541.84" y="727.69" width="9.56" height="1.93" fill="#111" /><rect x="541.84" y="730.39" width="9.56" height="3.47" fill="#d8d8d8" /><rect x="541.84" y="734.4" width="9.56" height="1.7" fill="#111" /><rect x="541.84" y="736.71" width="9.56" height="4.08" fill="#c4c4c4" /><rect x="553.09" y="699.71" width="1.85" height="40.69" fill="#dcdcdc" /><polygon points="554.94,698.94 560.88,693.01 560.88,735.1 554.94,741.18" fill="#050505" /><circle cx="543.54" cy="730.39" r="13.1" fill="#0c9090" /><path d="M531.97 733.47 A12.33 12.33 0 0 1 552.78 721.29 L542.76 733.86 Z" fill="#080808"/><polyline points="543.92,733.47 553.17,723.84" fill="none" stroke="#e8e8e8" stroke-width="2.0" /><rect x="534.29" y="723.84" width="10.02" height="1.54" fill="#e8e8e8" /><rect x="533.9" y="726.54" width="7.32" height="1.39" fill="#e8e8e8" /><rect x="538.14" y="736.94" width="7.71" height="1.16" fill="#c8f0e8" /><rect x="550.47" y="733.47" width="3.08" height="1.39" fill="#c8f0e8" /><circle cx="543.54" cy="730.39" r="12.79" fill="none" stroke="#003800" stroke-width="4.01"/><polyline points="553.17,740.02 558.18,744.26" fill="none" stroke="#003800" stroke-width="3.08" /><polyline points="557.02,743.11 564.73,749.66" fill="none" stroke="#8a3a00" stroke-width="4.78" stroke-linecap="round"/><rect x="634.56" y="693.78" width="23.51" height="47.55" fill="url(#gclr)" /><rect x="647.31" y="696.09" width="1.0" height="1.0" fill="#222" /><rect x="665.71" y="694.93" width="2.0" height="1.0" fill="#222" /><rect x="643.27" y="694.77" width="1.0" height="1.0" fill="#555" /><rect x="644.23" y="704.26" width="2.0" height="1.0" fill="#222" /><rect x="639.91" y="697.57" width="2.0" height="1.0" fill="#222" /><rect x="656.99" y="694.02" width="1.0" height="1.0" fill="#e04010" /><rect x="655.92" y="695.73" width="1.0" height="1.0" fill="#555" /><rect x="655.33" y="704.67" width="1.0" height="1.0" fill="#e04010" /><rect x="656.85" y="706.06" width="1.0" height="1.0" fill="#e04010" /><rect x="655.59" y="694.29" width="2.0" height="1.0" fill="#222" /><rect x="642.95" y="706.91" width="1.0" height="1.0" fill="#555" /><rect x="652.56" y="711.87" width="1.0" height="1.0" fill="#e04010" /><rect x="644.52" y="696.68" width="1.0" height="1.0" fill="#e04010" /><rect x="656.58" y="703.74" width="2.0" height="1.0" fill="#e04010" /><rect x="651.94" y="705.45" width="1.0" height="1.0" fill="#222" /><rect x="654.27" y="696.38" width="1.0" height="1.0" fill="#e04010" /><rect x="669.86" y="701.62" width="2.0" height="1.0" fill="#222" /><rect x="656.53" y="710.89" width="1.0" height="1.0" fill="#e04010" /><rect x="661.05" y="705.15" width="1.0" height="1.0" fill="#555" /><rect x="666.41" y="712.3" width="2.0" height="1.0" fill="#555" /><rect x="659.9" y="694.25" width="2.0" height="1.0" fill="#e04010" /><rect x="656.71" y="706.92" width="1.0" height="1.0" fill="#555" /><rect x="661.84" y="711.13" width="1.0" height="1.0" fill="#e04010" /><rect x="670.13" y="700.27" width="1.0" height="1.0" fill="#222" /><rect x="637.51" y="708.7" width="2.0" height="1.0" fill="#e04010" /><rect x="644.49" y="700.99" width="1.0" height="1.0" fill="#555" /><rect x="641.49" y="701.21" width="1.0" height="1.0" fill="#e04010" /><rect x="665.64" y="710.66" width="2.0" height="1.0" fill="#e04010" /><rect x="650.69" y="700.34" width="1.0" height="1.0" fill="#555" /><rect x="640.91" y="696.61" width="2.0" height="1.0" fill="#e04010" /><rect x="643.96" y="702.91" width="1.0" height="1.0" fill="#e04010" /><rect x="645.76" y="695.98" width="2.0" height="1.0" fill="#e04010" /><rect x="656.28" y="712.48" width="1.0" height="1.0" fill="#222" /><rect x="668.61" y="708.94" width="1.0" height="1.0" fill="#555" /><rect x="650.09" y="695.12" width="1.0" height="1.0" fill="#555" /><rect x="642.38" y="713.12" width="1.0" height="1.0" fill="#555" /><rect x="639.4" y="705.28" width="1.0" height="1.0" fill="#222" /><rect x="656.3" y="703.97" width="2.0" height="1.0" fill="#e04010" /><rect x="636.27" y="710.87" width="1.0" height="1.0" fill="#555" /><rect x="658.8" y="712.52" width="1.0" height="1.0" fill="#e04010" /><rect x="639.88" y="710.35" width="1.0" height="1.0" fill="#555" /><rect x="653.23" y="694.76" width="2.0" height="1.0" fill="#222" /><rect x="648.01" y="698.42" width="2.0" height="1.0" fill="#e04010" /><rect x="636.19" y="712.43" width="1.0" height="1.0" fill="#e04010" /><rect x="660.86" y="711.68" width="2.0" height="1.0" fill="#e04010" /><rect x="667.27" y="707.23" width="2.0" height="1.0" fill="#e04010" /><rect x="648.9" y="696.42" width="2.0" height="1.0" fill="#e04010" /><rect x="655.37" y="703.28" width="2.0" height="1.0" fill="#e04010" /><rect x="665.35" y="713.13" width="1.0" height="1.0" fill="#e04010" /><rect x="665.6" y="708.12" width="1.0" height="1.0" fill="#e04010" /><rect x="654.48" y="700.27" width="1.0" height="1.0" fill="#222" /><rect x="664.56" y="702.65" width="2.0" height="1.0" fill="#e04010" /><rect x="657.72" y="700.04" width="1.0" height="1.0" fill="#e04010" /><rect x="638.31" y="695.1" width="1.0" height="1.0" fill="#555" /><rect x="647.83" y="702.87" width="1.0" height="1.0" fill="#222" /><rect x="668.97" y="700.04" width="2.0" height="1.0" fill="#222" /><rect x="639.77" y="700.95" width="1.0" height="1.0" fill="#e04010" /><rect x="668.22" y="701.87" width="1.0" height="1.0" fill="#e04010" /><rect x="664.96" y="712.85" width="1.0" height="1.0" fill="#555" /><rect x="650.18" y="712.35" width="1.0" height="1.0" fill="#e04010" /><rect x="672.07" y="693.57" width="2.0" height="1.0" fill="#555" /><rect x="640.74" y="709.89" width="2.0" height="1.0" fill="#555" /><rect x="670.01" y="696.19" width="1.0" height="1.0" fill="#e04010" /><rect x="635.86" y="712.84" width="2.0" height="1.0" fill="#222" /><rect x="663.06" y="695.85" width="1.0" height="1.0" fill="#e04010" /><rect x="636.37" y="697.36" width="2.0" height="1.0" fill="#e04010" /><rect x="647.39" y="704.13" width="1.0" height="1.0" fill="#e04010" /><rect x="669.0" y="700.24" width="2.0" height="1.0" fill="#555" /><rect x="656.91" y="711.48" width="2.0" height="1.0" fill="#555" /><rect x="640.17" y="696.11" width="1.0" height="1.0" fill="#222" /><rect x="652.0" y="728.94" width="1.0" height="1.0" fill="#fff" /><rect x="638.73" y="724.99" width="1.0" height="1.0" fill="#fff" /><rect x="647.17" y="720.67" width="2.0" height="1.0" fill="#fff" /><rect x="652.17" y="714.23" width="1.0" height="1.0" fill="#fff" /><rect x="640.4" y="719.23" width="1.0" height="1.0" fill="#fff" /><rect x="646.1" y="727.57" width="1.0" height="1.0" fill="#fff" /><rect x="644.68" y="729.06" width="1.0" height="1.0" fill="#fff" /><rect x="650.16" y="724.37" width="2.0" height="1.0" fill="#fff" /><rect x="646.1" y="718.37" width="2.0" height="1.0" fill="#fff" /><rect x="655.22" y="737.27" width="1.0" height="1.0" fill="#fff" /><rect x="653.4" y="715.14" width="1.0" height="1.0" fill="#fff" /><rect x="643.56" y="720.38" width="1.0" height="1.0" fill="#fff" /><rect x="644.35" y="717.35" width="2.0" height="1.0" fill="#fff" /><rect x="652.17" y="737.39" width="1.0" height="1.0" fill="#fff" /><rect x="655.58" y="729.97" width="2.0" height="1.0" fill="#fff" /><rect x="638.09" y="736.98" width="2.0" height="1.0" fill="#fff" /><rect x="639.77" y="739.02" width="2.0" height="1.0" fill="#fff" /><rect x="654.38" y="715.89" width="1.0" height="1.0" fill="#fff" /><rect x="638.49" y="723.76" width="2.0" height="1.0" fill="#fff" /><rect x="642.39" y="716.85" width="2.0" height="1.0" fill="#fff" /><rect x="636.97" y="721.84" width="2.0" height="1.0" fill="#fff" /><rect x="647.12" y="724.02" width="1.0" height="1.0" fill="#fff" /><rect x="643.39" y="726.28" width="2.0" height="1.0" fill="#fff" /><rect x="646.2" y="713.0" width="1.0" height="1.0" fill="#fff" /><rect x="656.29" y="714.19" width="2.0" height="1.0" fill="#fff" /><rect x="640.92" y="737.65" width="1.0" height="1.0" fill="#fff" /><rect x="640.89" y="714.92" width="2.0" height="1.0" fill="#fff" /><rect x="653.61" y="730.92" width="2.0" height="1.0" fill="#fff" /><rect x="643.86" y="726.84" width="2.0" height="1.0" fill="#fff" /><rect x="650.33" y="713.74" width="1.0" height="1.0" fill="#fff" /><rect x="652.51" y="716.49" width="1.0" height="1.0" fill="#fff" /><rect x="640.85" y="711.61" width="1.0" height="1.0" fill="#fff" /><rect x="652.55" y="713.57" width="1.0" height="1.0" fill="#fff" /><rect x="636.41" y="736.39" width="2.0" height="1.0" fill="#fff" /><rect x="635.2" y="740.24" width="2.0" height="1.0" fill="#fff" /><rect x="655.3" y="718.97" width="1.0" height="1.0" fill="#fff" /><rect x="635.9" y="731.9" width="1.0" height="1.0" fill="#fff" /><rect x="656.24" y="718.79" width="1.0" height="1.0" fill="#fff" /><rect x="639.38" y="720.26" width="2.0" height="1.0" fill="#fff" /><rect x="646.61" y="717.15" width="2.0" height="1.0" fill="#fff" /><rect x="645.93" y="716.33" width="2.0" height="1.0" fill="#fff" /><rect x="652.6" y="740.25" width="1.0" height="1.0" fill="#fff" /><rect x="635.28" y="732.59" width="1.0" height="1.0" fill="#fff" /><rect x="646.24" y="718.32" width="2.0" height="1.0" fill="#fff" /><rect x="637.28" y="735.11" width="2.0" height="1.0" fill="#fff" /><rect x="649.37" y="727.11" width="2.0" height="1.0" fill="#fff" /><rect x="656.26" y="720.14" width="1.0" height="1.0" fill="#fff" /><rect x="656.53" y="721.16" width="1.0" height="1.0" fill="#fff" /><rect x="643.84" y="721.3" width="1.0" height="1.0" fill="#fff" /><rect x="653.33" y="711.54" width="2.0" height="1.0" fill="#fff" /><rect x="644.41" y="712.74" width="2.0" height="1.0" fill="#fff" /><rect x="654.07" y="730.76" width="2.0" height="1.0" fill="#fff" /><rect x="648.1" y="731.41" width="1.0" height="1.0" fill="#fff" /><rect x="645.04" y="715.74" width="2.0" height="1.0" fill="#fff" /><rect x="635.03" y="721.79" width="2.0" height="1.0" fill="#fff" /><rect x="656.31" y="727.14" width="1.0" height="1.0" fill="#fff" /><rect x="635.7" y="736.96" width="1.0" height="1.0" fill="#fff" /><rect x="642.78" y="711.15" width="2.0" height="1.0" fill="#fff" /><rect x="636.79" y="719.29" width="1.0" height="1.0" fill="#fff" /><rect x="640.4" y="733.86" width="1.0" height="1.0" fill="#fff" /><rect x="659.22" y="702.26" width="11.71" height="18.11" fill="#f4a480" /><circle cx="666.93" cy="704.57" r="0.92" fill="#20a020" /><polygon points="672.33,697.25 678.49,693.01 678.49,735.01 672.33,741.18" fill="#000" /><rect x="673.48" y="702.64" width="2.7" height="3.85" fill="#888" /><circle cx="659.99" cy="730.39" r="13.1" fill="#10a060" /><path d="M648.43 733.47 A12.33 12.33 0 0 1 669.24 721.29 L659.22 733.86 Z" fill="#080808"/><polyline points="660.38,733.47 669.63,723.84" fill="none" stroke="#f0a0a0" stroke-width="2.0" /><rect x="650.75" y="723.84" width="10.02" height="1.54" fill="#e8e8e8" /><rect x="650.36" y="726.54" width="7.32" height="1.39" fill="#e8e8e8" /><rect x="654.6" y="736.94" width="7.71" height="1.16" fill="#c8f0e8" /><rect x="666.93" y="733.47" width="3.08" height="1.39" fill="#c8f0e8" /><circle cx="659.99" cy="730.39" r="12.79" fill="none" stroke="#1414a0" stroke-width="4.01"/><polyline points="669.63,740.02 674.64,744.26" fill="none" stroke="#1414a0" stroke-width="3.08" /><polyline points="673.48,743.11 681.19,749.66" fill="none" stroke="#e04010" stroke-width="4.78" stroke-linecap="round"/><polygon points="758.88,693.01 781.85,693.01 775.3,698.94 752.33,698.94" fill="#7c0000" /><polygon points="781.85,693.01 795.88,693.01 790.1,698.94 775.3,698.94" fill="#050505" /><rect x="752.33" y="698.94" width="22.97" height="42.24" fill="#f40c04" /><rect x="766.57" y="698.94" width="8.73" height="42.24" fill="#c40000" /><rect x="752.33" y="699.56" width="22.97" height="9.31" fill="#060606" /><rect x="753.87" y="701.64" width="4.62" height="1.54" fill="#fff" /><rect x="756.18" y="738.25" width="9.25" height="1.85" fill="#fff" opacity="0.9"/><rect x="752.18" y="729.35" width="2.31" height="1.39" fill="#fff" /><circle cx="771.62" cy="704.22" r="1.16" fill="#20c020" /><rect x="775.3" y="698.94" width="1.08" height="42.24" fill="#f0f0f0" /><rect x="776.22" y="699.56" width="13.26" height="41.62" fill="#a4a4a4" /><rect x="782.62" y="703.72" width="3.47" height="4.86" fill="#18a018" /><rect x="776.84" y="727.69" width="9.56" height="1.93" fill="#111" /><rect x="776.84" y="730.39" width="9.56" height="3.47" fill="#d8d8d8" /><rect x="776.84" y="734.4" width="9.56" height="1.7" fill="#111" /><rect x="776.84" y="736.71" width="9.56" height="4.08" fill="#c4c4c4" /><rect x="788.09" y="699.71" width="1.85" height="40.69" fill="#dcdcdc" /><polygon points="789.94,698.94 795.88,693.01 795.88,735.1 789.94,741.18" fill="#050505" /><circle cx="778.54" cy="730.39" r="13.1" fill="#109090" /><path d="M766.97 733.47 A12.33 12.33 0 0 1 787.78 721.29 L777.76 733.86 Z" fill="#080808"/><polyline points="778.92,733.47 788.17,723.84" fill="none" stroke="#e8e8e8" stroke-width="2.0" /><rect x="769.29" y="723.84" width="10.02" height="1.54" fill="#e8e8e8" /><rect x="768.9" y="726.54" width="7.32" height="1.39" fill="#e8e8e8" /><rect x="773.14" y="736.94" width="7.71" height="1.16" fill="#c8f0e8" /><rect x="785.47" y="733.47" width="3.08" height="1.39" fill="#c8f0e8" /><circle cx="778.54" cy="730.39" r="12.79" fill="none" stroke="#1414a0" stroke-width="4.01"/><polyline points="788.17,740.02 793.18,744.26" fill="none" stroke="#1414a0" stroke-width="3.08" /><polyline points="792.02,743.11 799.73,749.66" fill="none" stroke="#b04000" stroke-width="4.78" stroke-linecap="round"/><polygon points="877.58,696.86 900.7,696.86 893.92,702.8 870.8,702.8" fill="#7c0000" /><polygon points="900.7,696.86 914.34,696.86 908.41,702.8 893.92,702.8" fill="#050505" /><rect x="870.8" y="702.8" width="23.12" height="43.78" fill="#f40c04" /><rect x="885.13" y="702.8" width="8.79" height="43.78" fill="#c40000" /><rect x="870.8" y="703.41" width="23.12" height="9.67" fill="#060606" /><rect x="872.34" y="705.5" width="4.62" height="1.54" fill="#fff" /><rect x="874.65" y="743.65" width="9.25" height="1.85" fill="#fff" opacity="0.9"/><rect x="870.65" y="734.32" width="2.31" height="1.39" fill="#fff" /><circle cx="890.22" cy="708.27" r="1.16" fill="#20c020" /><rect x="893.92" y="702.8" width="1.08" height="43.78" fill="#f0f0f0" /><rect x="894.85" y="703.41" width="12.95" height="43.16" fill="#a4a4a4" /><rect x="901.24" y="707.58" width="3.47" height="4.86" fill="#18a018" /><rect x="895.46" y="733.09" width="9.25" height="1.93" fill="#111" /><rect x="895.46" y="735.78" width="9.25" height="3.47" fill="#d8d8d8" /><rect x="895.46" y="739.79" width="9.25" height="1.7" fill="#111" /><rect x="895.46" y="742.1" width="9.25" height="4.08" fill="#c4c4c4" /><rect x="906.41" y="703.57" width="1.85" height="42.24" fill="#dcdcdc" /><polygon points="908.26,702.8 914.34,696.86 914.34,740.35 908.26,746.57" fill="#050505" /><path d="M898.01 708.19 V703.8 Q898.01 700.33 903.17 700.33 Q908.56 700.33 908.56 703.8 V708.19" fill="none" stroke="#c8ccc8" stroke-width="2.8"/><rect x="894.46" y="706.88" width="18.88" height="14.41" fill="url(#glock)" /><circle cx="903.17" cy="712.28" r="1.7" fill="#181808" /><rect x="902.01" y="712.66" width="2.31" height="5.01" fill="#181808" /></svg>
</body></html>
